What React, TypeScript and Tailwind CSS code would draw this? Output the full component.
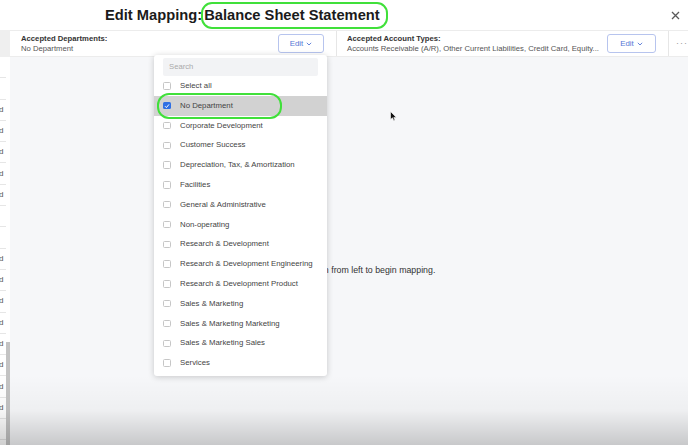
import React from "react";

const items = [
  "Select all",
  "No Department",
  "Corporate Development",
  "Customer Success",
  "Depreciation, Tax, & Amortization",
  "Facilities",
  "General & Administrative",
  "Non-operating",
  "Research & Development",
  "Research & Development Engineering",
  "Research & Development Product",
  "Sales & Marketing",
  "Sales & Marketing Marketing",
  "Sales & Marketing Sales",
  "Services",
];

const sideRows = ["", "", "d", "d", "d", "d", "d", "", "", "d", "d", "d", "d", "d", "d", "d", "d", ""];

function Chevron() {
  return (
    <svg width="6" height="4" viewBox="0 0 6 4" className="ml-[3px]">
      <path d="M0.8 0.8 L3 3 L5.2 0.8" fill="none" stroke="currentColor" strokeWidth="0.9" />
    </svg>
  );
}

function EditButton({ w }: { w: string }) {
  return (
    <button
      className={`${w} h-[19px] shrink-0 flex items-center justify-center rounded-[3px] border border-[#b7c4ee] bg-white text-[7.9px] text-[#5677d6]`}
    >
      Edit
      <Chevron />
    </button>
  );
}

export default function App() {
  return (
    <div className="relative w-[688px] h-[445px] overflow-hidden bg-white font-['Liberation_Sans',Arial,sans-serif] flex flex-col">
      {/* Header */}
      <header className="h-[30px] shrink-0 flex items-center pl-[105px] pr-[7px] bg-white">
        <h1 className="flex items-center text-[14.7px] font-bold text-[#1b1b1b] leading-none whitespace-pre">
          <span>Edit Mapping: </span>
          <span className="-ml-[5px] h-[27px] flex items-center border-2 border-[#40e03a] rounded-[11px] pl-[1px] pr-[6px]">
            Balance Sheet Statement
          </span>
        </h1>
        <button className="ml-auto w-[12px] h-[12px] flex items-center justify-center text-[#5a5a5a]">
          <svg width="9" height="9" viewBox="0 0 9 9">
            <path d="M1 1 L8 8 M8 1 L1 8" stroke="currentColor" strokeWidth="1.3" />
          </svg>
        </button>
      </header>

      <div className="flex-1 flex min-h-0">
        {/* Left strip (underlying list) */}
        <aside className="w-[10px] shrink-0 flex flex-col bg-white">
          <div className="h-[27px] shrink-0 bg-[#efefef]" />
          <div className="flex-1 flex min-h-0">
            <div className="w-[6px] overflow-hidden flex flex-col">
              {sideRows.map((t, i) => (
                <div
                  key={i}
                  className="h-[21.3px] shrink-0 border-b border-[#e6e6e6] flex items-center justify-end pr-[2.5px] text-[8px] text-[#555]"
                >
                  {t}
                </div>
              ))}
            </div>
            <div className="w-[4px] flex flex-col">
              <div className="mt-auto h-[103px] bg-[#c3c3c3]" />
            </div>
          </div>
        </aside>

        <main className="flex-1 flex flex-col min-w-0">
          {/* Accepted bar */}
          <div className="h-[27px] shrink-0 bg-white border-t border-b border-[#ececec] flex items-center">
            <div className="w-[329px] h-full flex items-center pl-[11px] pr-[12px] border-r border-[#e6e6e6]">
              <div className="flex-1 leading-[10px]">
                <div className="text-[7.7px] font-bold text-[#333]">Accepted Departments:</div>
                <div className="text-[7.7px] text-[#555]">No Department</div>
              </div>
              <EditButton w="w-[46px]" />
            </div>
            <div className="w-[334px] h-full flex items-center pl-[10px] pr-[12px] border-r border-[#e6e6e6]">
              <div className="flex-1 min-w-0 leading-[10px]">
                <div className="text-[7.7px] font-bold text-[#333]">Accepted Account Types:</div>
                <div className="text-[7.7px] text-[#555] whitespace-nowrap">
                  Accounts Receivable (A/R), Other Current Liabilities, Credit Card, Equity...
                </div>
              </div>
              <EditButton w="w-[49px]" />
            </div>
            <div className="flex-1 h-full flex items-center pl-[7px] text-[9px] text-[#999] tracking-[1px]">
              ···
            </div>
          </div>

          {/* Content */}
          <div className="flex-1 bg-[#f6f7f9] flex justify-center pt-[207px]">
            <p className="ml-[4px] text-[8.8px] leading-[12px] text-[#333] whitespace-nowrap">
              Select a section from left to begin mapping.
            </p>
          </div>
        </main>
      </div>

      {/* Dropdown */}
      <div className="absolute left-[154px] top-[55px] w-[173px] h-[321px] bg-white rounded-[3px] shadow-[0_1px_6px_rgba(0,0,0,0.2)] flex flex-col pt-[3px]">
        <div className="mx-[9px] h-[18px] shrink-0 rounded-[2px] bg-[#f2f3f5] flex items-center pl-[6px] text-[7.7px] text-[#aaa]">
          Search
        </div>
        <ul className="flex flex-col">
          {items.map((it, i) => {
            const checked = i === 1;
            return (
              <li
                key={it}
                className={`h-[19.8px] shrink-0 flex items-center pl-[9px] text-[7.8px] text-[#444] ${
                  checked ? "bg-[#d2d2d2]" : ""
                }`}
              >
                {checked ? (
                  <span className="w-[7.5px] h-[7.5px] rounded-[1.5px] bg-[#2f6fe4] flex items-center justify-center">
                    <svg width="6" height="6" viewBox="0 0 6 6">
                      <path d="M1 3.2 L2.4 4.6 L5 1.4" fill="none" stroke="white" strokeWidth="1" />
                    </svg>
                  </span>
                ) : (
                  <span className="w-[7.5px] h-[7.5px] rounded-[1.5px] border border-[#c6c6c6] bg-white" />
                )}
                <span className="ml-[9.5px] whitespace-nowrap">{it}</span>
              </li>
            );
          })}
        </ul>
        <div className="absolute left-[3px] top-[38px] w-[125px] h-[26px] border-2 border-[#40e03a] rounded-[12px] pointer-events-none" />
      </div>

      {/* Mouse cursor */}
      <svg className="absolute left-[390px] top-[111px]" width="7" height="11" viewBox="0 0 7 11">
        <path d="M0.5 0.5 L0.5 8.5 L2.5 6.8 L3.8 9.8 L5 9.3 L3.8 6.4 L6.3 6.4 Z" fill="#111" stroke="white" strokeWidth="0.6" />
      </svg>

      {/* Bottom vignette */}
      <div className="absolute left-0 right-0 bottom-0 h-[70px] pointer-events-none bg-linear-to-b from-transparent via-[rgba(0,0,0,0.03)] to-[rgba(0,0,0,0.19)]" />
    </div>
  );
}
